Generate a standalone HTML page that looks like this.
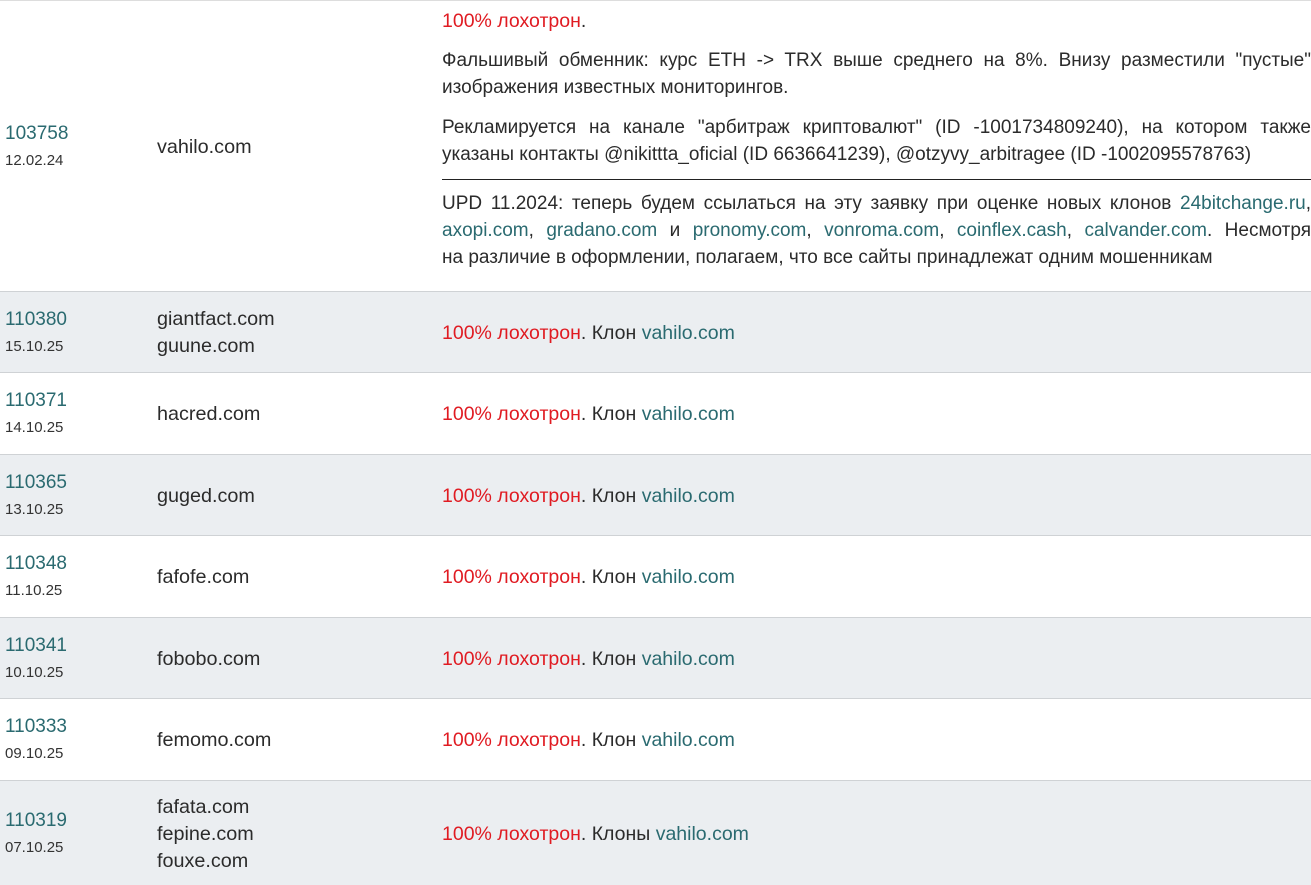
<!DOCTYPE html>
<html><head><meta charset="utf-8"><style>
*{margin:0;padding:0;box-sizing:border-box}
body{width:1311px;height:873px;overflow:hidden;background:#fff;font-family:"Liberation Sans",sans-serif;color:#2b2b2b;font-size:19.5px}
.row{position:absolute;left:0;width:1311px;border-bottom:1px solid #cfd2d5}
.g{background:#ebeef1}
.c1,.c2,.c3{position:absolute;top:0;bottom:0;display:flex;flex-direction:column;justify-content:center}
.c1{left:5px}.c2{left:157px}.c3{left:442px;right:0}
.id{color:#2a6a70;font-size:19px;line-height:27px;margin-top:2px}
.dt{font-size:15px;line-height:28px;color:#333}
.dm{line-height:27px;font-size:19.8px;margin-top:2px}
.r{color:#e01b22}.l{color:#2a6a70}
.j{text-align:justify;text-align-last:justify;line-height:27px;white-space:nowrap;overflow:hidden;font-size:19px}
.n{line-height:27px;white-space:nowrap;margin-top:2px}
.c3 .j+.n,.c3 hr+.j{margin-top:0}
hr{border:0;border-top:1px solid #222;margin:11px 0 10px 0}
</style></head><body>
<div class="row" style="top:0;height:292px;border-top:1px solid #ddd">
 <div class="c1"><div class="id">103758</div><div class="dt">12.02.24</div></div>
 <div class="c2"><div class="dm">vahilo.com</div></div>
 <div class="c3" style="justify-content:flex-start;padding-top:5px">
  <div class="n r">100% лохотрон<span style="color:#2b2b2b">.</span></div>
  <div class="j" style="margin-top:12px">Фальшивый обменник: курс ETH -&gt; TRX выше среднего на 8%. Внизу разместили "пустые"</div>
  <div class="n" style="font-size:19px;margin-top:0">изображения известных мониторингов.</div>
  <div class="j" style="margin-top:13px">Рекламируется на канале "арбитраж криптовалют" (ID -1001734809240), на котором также</div>
  <div class="n" style="font-size:19px;margin-top:0">указаны контакты @nikittta_oficial (ID 6636641239), @otzyvy_arbitragee (ID -1002095578763)</div>
  <hr>
  <div class="j">UPD 11.2024: теперь будем ссылаться на эту заявку при оценке новых клонов <span class="l">24bitchange.ru</span>,</div>
  <div class="j"><span class="l">axopi.com</span>, <span class="l">gradano.com</span> и <span class="l">pronomy.com</span>, <span class="l">vonroma.com</span>, <span class="l">coinflex.cash</span>, <span class="l">calvander.com</span>. Несмотря</div>
  <div class="n" style="font-size:19px;margin-top:0">на различие в оформлении, полагаем, что все сайты принадлежат одним мошенникам</div>
 </div>
</div>
<div class="row g" style="top:292px;height:81px">
 <div class="c1"><div class="id">110380</div><div class="dt">15.10.25</div></div>
 <div class="c2"><div class="dm">giantfact.com</div><div class="dm" style="margin-top:0">guune.com</div></div>
 <div class="c3"><div class="n"><span class="r">100% лохотрон</span>. Клон <span class="l">vahilo.com</span></div></div>
</div>
<div class="row" style="top:373px;height:82px">
 <div class="c1"><div class="id">110371</div><div class="dt">14.10.25</div></div>
 <div class="c2"><div class="dm">hacred.com</div></div>
 <div class="c3"><div class="n"><span class="r">100% лохотрон</span>. Клон <span class="l">vahilo.com</span></div></div>
</div>
<div class="row g" style="top:455px;height:81px">
 <div class="c1"><div class="id">110365</div><div class="dt">13.10.25</div></div>
 <div class="c2"><div class="dm">guged.com</div></div>
 <div class="c3"><div class="n"><span class="r">100% лохотрон</span>. Клон <span class="l">vahilo.com</span></div></div>
</div>
<div class="row" style="top:536px;height:82px">
 <div class="c1"><div class="id">110348</div><div class="dt">11.10.25</div></div>
 <div class="c2"><div class="dm">fafofe.com</div></div>
 <div class="c3"><div class="n"><span class="r">100% лохотрон</span>. Клон <span class="l">vahilo.com</span></div></div>
</div>
<div class="row g" style="top:618px;height:81px">
 <div class="c1"><div class="id">110341</div><div class="dt">10.10.25</div></div>
 <div class="c2"><div class="dm">fobobo.com</div></div>
 <div class="c3"><div class="n"><span class="r">100% лохотрон</span>. Клон <span class="l">vahilo.com</span></div></div>
</div>
<div class="row" style="top:699px;height:82px">
 <div class="c1"><div class="id">110333</div><div class="dt">09.10.25</div></div>
 <div class="c2"><div class="dm">femomo.com</div></div>
 <div class="c3"><div class="n"><span class="r">100% лохотрон</span>. Клон <span class="l">vahilo.com</span></div></div>
</div>
<div class="row g" style="top:781px;height:104px;border-bottom:0">
 <div class="c1"><div class="id">110319</div><div class="dt">07.10.25</div></div>
 <div class="c2"><div class="dm">fafata.com</div><div class="dm" style="margin-top:0">fepine.com</div><div class="dm" style="margin-top:0">fouxe.com</div></div>
 <div class="c3"><div class="n"><span class="r">100% лохотрон</span>. Клоны <span class="l">vahilo.com</span></div></div>
</div>
</body></html>
